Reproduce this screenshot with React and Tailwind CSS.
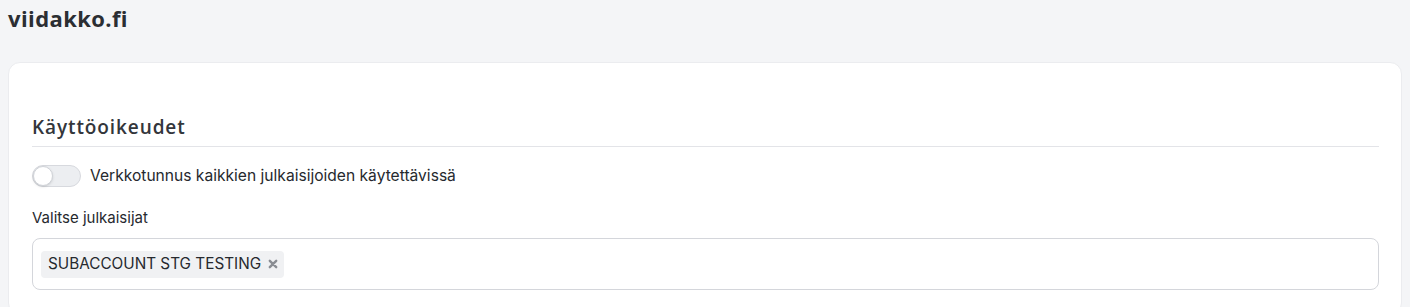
import React from "react";

export default function App() {
  return (
    <div className="min-h-[307px] bg-[#f4f5f7] px-2 pt-[2px]" style={{ fontFamily: "Inter, 'Noto Sans', sans-serif" }}>
      <h1 className="text-[22px] leading-[32px] font-bold text-[#2b2e33] tracking-[0.4px]" style={{ fontFamily: "'Open Sans', Inter, sans-serif" }}>
        viidakko.fi
      </h1>
      <div className="mt-[28px] rounded-[12px] border border-[#ebecef] bg-white pl-[23px] pr-[22px] pt-[50px] pb-6">
        <h2 className="text-[19px] leading-[28px] font-semibold text-[#33363b] tracking-[0.9px]" style={{ fontFamily: "'Open Sans', Inter, sans-serif" }}>
          Käyttöoikeudet
        </h2>
        <div className="mt-[5px] h-px bg-[#e3e4e8]" />
        <div className="mt-[18px] flex items-center gap-[9px]">
          <div className="relative h-[22px] w-[49px] rounded-full border border-[#d7d9de] bg-[#eceef1]">
            <div className="absolute left-0 top-0 h-[20px] w-[20px] rounded-full border border-[#d0d3d8] bg-white shadow-sm" />
          </div>
          <span className="text-[15.6px] leading-[20px] text-[#26292e]">Verkkotunnus kaikkien julkaisijoiden käytettävissä</span>
        </div>
        <div className="mt-[21px] text-[15px] leading-[20px] text-[#26292e]">Valitse julkaisijat</div>
        <div className="mt-[10px] flex h-[52px] items-center rounded-[8px] border border-[#d4d6db] px-2">
          <div className="flex h-[27px] items-center gap-[7px] rounded-[4px] bg-[#f0f1f3] pl-[7px] pr-[6px] text-[15.3px] text-[#26292e]">
            <span>SUBACCOUNT STG TESTING</span>
            <svg width="10" height="10" viewBox="0 0 10 10">
              <path d="M1.8 1.8L8.2 8.2M8.2 1.8L1.8 8.2" stroke="#8a8d93" strokeWidth="2.4" strokeLinecap="round" />
            </svg>
          </div>
        </div>
      </div>
    </div>
  );
}
